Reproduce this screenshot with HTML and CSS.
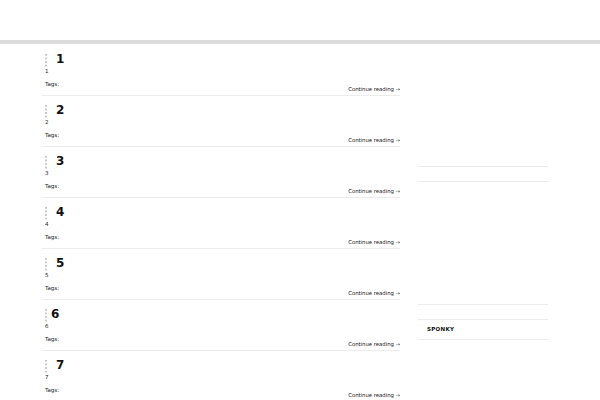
FILE: index.html
```html
<!DOCTYPE html>
<html>
<head>
<meta charset="utf-8">
<link rel="stylesheet" href="styles.css">
</head>
<body>
<header class="site-header"></header>
<div class="bar"></div>
<div class="layout">
  <main class="posts">
    <article class="post">
      <div class="post-head"><span class="dots"></span><h2 class="title">1</h2></div>
      <p class="excerpt">1</p>
      <div class="meta"><span class="tags">Tags:</span><a class="more">Continue reading →</a></div>
    </article>
    <article class="post">
      <div class="post-head"><span class="dots"></span><h2 class="title">2</h2></div>
      <p class="excerpt">2</p>
      <div class="meta"><span class="tags">Tags:</span><a class="more">Continue reading →</a></div>
    </article>
    <article class="post">
      <div class="post-head"><span class="dots"></span><h2 class="title">3</h2></div>
      <p class="excerpt">3</p>
      <div class="meta"><span class="tags">Tags:</span><a class="more">Continue reading →</a></div>
    </article>
    <article class="post">
      <div class="post-head"><span class="dots"></span><h2 class="title">4</h2></div>
      <p class="excerpt">4</p>
      <div class="meta"><span class="tags">Tags:</span><a class="more">Continue reading →</a></div>
    </article>
    <article class="post">
      <div class="post-head"><span class="dots"></span><h2 class="title">5</h2></div>
      <p class="excerpt">5</p>
      <div class="meta"><span class="tags">Tags:</span><a class="more">Continue reading →</a></div>
    </article>
    <article class="post">
      <div class="post-head"><span class="dots"></span><h2 class="title title-near">6</h2></div>
      <p class="excerpt">6</p>
      <div class="meta"><span class="tags">Tags:</span><a class="more">Continue reading →</a></div>
    </article>
    <article class="post">
      <div class="post-head"><span class="dots"></span><h2 class="title">7</h2></div>
      <p class="excerpt">7</p>
      <div class="meta"><span class="tags">Tags:</span><a class="more">Continue reading →</a></div>
    </article>
  </main>
  <aside class="sidebar">
    <div class="widget w1"></div>
    <div class="widget w2"></div>
    <div class="widget w3"></div>
    <div class="widget w4"></div>
    <div class="widget w5"><span class="name">SPONKY</span></div>
  </aside>
</div>
</body>
</html>
```
FILE: styles.css
```css
html, body {
  margin: 0;
  padding: 0;
  background: #fff;
}
body {
  font-family: "DejaVu Sans", sans-serif;
  color: #222;
  width: 600px;
  height: 400px;
  overflow: hidden;
}
.site-header {
  height: 40px;
}
.bar {
  height: 4px;
  background: #dcdcdc;
}
.layout {
  display: flex;
  padding-left: 42px;
  gap: 18px;
}
.posts {
  width: 358px;
  padding-top: 1px;
}
.post {
  height: 50px;
  border-bottom: 1px solid #ececec;
  padding: 0 0 0 3px;
  box-sizing: content-box;
  display: flex;
  flex-direction: column;
}
.post-head {
  display: flex;
  align-items: flex-start;
  height: 19px;
  padding-top: 5px;
  box-sizing: border-box;
}
.dots {
  display: block;
  width: 2px;
  height: 14px;
  margin-top: 3px;
  background: radial-gradient(circle, #c8c8c8 0.9px, transparent 1.1px) 0 0 / 2px 3.6px repeat-y;
}
.title {
  margin: 0 0 0 9px;
  font-size: 12px;
  line-height: 14px;
  font-weight: bold;
  color: #111;
  padding-top: 2px;
}
.title-near {
  margin-left: 4px;
}
.excerpt {
  margin: 4px 0 0 0;
  font-size: 5.5px;
  line-height: 6px;
  color: #222;
}
.meta {
  margin-top: 7px;
  height: 13px;
  font-size: 5.5px;
  line-height: 6px;
  color: #222;
}
.tags {
  display: block;
}
.more {
  display: block;
  text-align: right;
  margin-top: -1px;
  font-size: 5.3px;
  color: #111;
}
.sidebar {
  width: 130px;
  padding-top: 122px;
}
.widget {
  border-bottom: 1px solid #ececec;
}
.w1 { height: 0; }
.w2 { height: 14px; }
.w3 { height: 14px; margin-top: 108px; }
.w4 { height: 14px; }
.w5 {
  height: 19px;
  display: flex;
  align-items: center;
  padding-left: 9px;
  padding-bottom: 1px;
  box-sizing: border-box;
  height: 20px;
}
.name {
  font-size: 5.5px;
  font-weight: bold;
  letter-spacing: 0.3px;
  color: #111;
}
```
